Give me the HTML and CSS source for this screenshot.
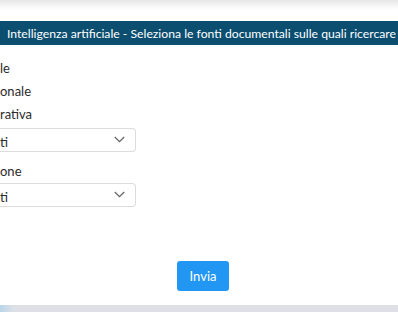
FILE: index.html
```html
<!DOCTYPE html>
<html lang="it">
<head>
<meta charset="utf-8">
<link rel="stylesheet" href="styles.css">
</head>
<body>
<div class="page">
  <div class="topshade"></div>
  <div class="modal">
    <div class="modal-header">Intelligenza artificiale - Seleziona le fonti documentali sulle quali ricercare</div>
    <div class="modal-body">
      <div class="check">le</div>
      <div class="check">onale</div>
      <div class="label">rativa</div>
      <div class="select"><span>ti</span>
        <svg class="chev" width="11" height="7" viewBox="0 0 11 7"><path d="M0.8 1 L5.5 5.7 L10.2 1" fill="none" stroke="#666" stroke-width="1.3"/></svg>
      </div>
      <div class="label label2">one</div>
      <div class="select"><span>ti</span>
        <svg class="chev" width="11" height="7" viewBox="0 0 11 7"><path d="M0.8 1 L5.5 5.7 L10.2 1" fill="none" stroke="#666" stroke-width="1.3"/></svg>
      </div>
      <div class="actions"><button class="btn">Invia</button></div>
    </div>
  </div>
  <div class="bottomband"><div class="bluebit"></div></div>
</div>
</body>
</html>
```
FILE: styles.css
```css
html, body {
  margin: 0;
  padding: 0;
  background: #fff;
}
body {
  width: 398px;
  height: 312px;
  overflow: hidden;
  font-family: "Lato", "Open Sans", sans-serif;
  color: #2b2b2b;
}
.page {
  display: flex;
  flex-direction: column;
  height: 312px;
}
.topshade {
  height: 21px;
  background: linear-gradient(#e6e6e6 0px, #f4f4f4 5px, #ffffff 10px, #ffffff 21px);
  flex: none;
}
.modal {
  flex: 1;
  display: flex;
  flex-direction: column;
  box-shadow: 0 2px 4px rgba(0,0,0,0.08);
}
.modal-header {
  height: 24px;
  line-height: 25px;
  background: #0b4e70;
  color: #fff;
  font-size: 12.2px;
  padding-left: 7px;
  white-space: nowrap;
  overflow: hidden;
}
.modal-body {
  display: flex;
  flex-direction: column;
  padding-top: 12px;
}
.check, .label {
  font-size: 13px;
  height: 23px;
  line-height: 23px;
}
.label2 {
  margin-top: 8px;
  height: 21px;
}
.select {
  height: 22px;
  border: 1px solid #dcdcdc;
  border-left: none;
  border-radius: 0 4px 4px 0;
  display: flex;
  align-items: center;
  justify-content: space-between;
  font-size: 13px;
  margin-top: 2px;
  padding-right: 10px;
  width: 125px;
}
.select span {
  padding-top: 4px;
}
.chev {
  margin-top: -1px;
}
.actions {
  display: flex;
  justify-content: flex-start;
  padding-left: 177px;
  margin-top: 54px;
}
.btn {
  width: 52px;
  height: 30px;
  background: #2196f3;
  color: #fff;
  border: none;
  border-radius: 3px;
  font-family: "Lato", "Open Sans", sans-serif;
  font-size: 13px;
  padding: 0;
}
.bottomband {
  height: 7px;
  flex: none;
  background: #dde0e5;
  display: flex;
}
.bluebit {
  width: 14px;
  background: linear-gradient(90deg, #b9d6ea, #dde0e5);
}
```
